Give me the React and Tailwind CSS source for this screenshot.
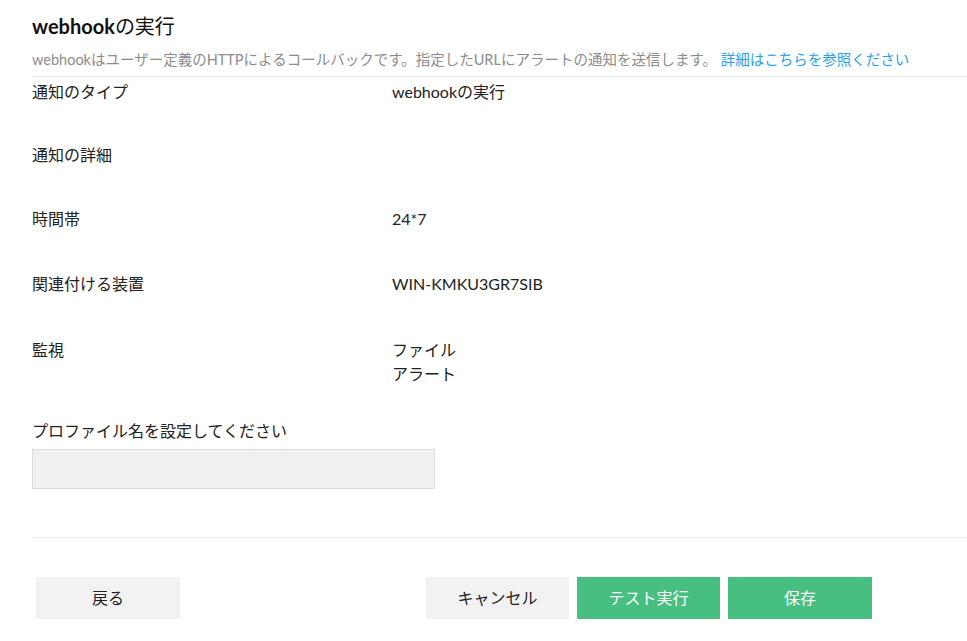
import React from 'react';

const rows = [
  {label: '通知のタイプ', value: ['webhookの実行'], gap: 'mb-[39px]'},
  {label: '通知の詳細', value: [], gap: 'mb-[40px]'},
  {label: '時間帯', value: ['24*7'], gap: 'mb-[41px]'},
  {label: '関連付ける装置', value: ['WIN-KMKU3GR7SIB'], gap: 'mb-[42px]'},
  {label: '監視', value: ['ファイル', 'アラート'], gap: 'mb-[33px]'},
];

export default function App() {
  return (
    <div
      className="min-h-[641px] bg-white pl-8 text-[#222]"
      style={{fontFamily: "Lato, 'Noto Sans CJK JP', sans-serif"}}
    >
      <h1 className="pt-[12px] text-[20px] leading-[28px] text-[#111]">
        <span className="font-bold">webhook</span>の実行
      </h1>
      <p className="mt-[10px] pb-[6px] text-[14.5px] leading-[20px] text-[#8c8c8c]">
        webhookはユーザー定義のHTTPによるコールバックです。指定したURLにアラートの通知を送信します。{' '}
        <a href="#" className="text-[#2ca0e8]">
          詳細はこちらを参照ください
        </a>
      </p>
      <div className="border-t border-[#e8e8e8] pt-[3px]">
        {rows.map(row => (
          <div key={row.label} className={`${row.gap} flex text-[16px] leading-[24px]`}>
            <div className="w-[360px] shrink-0">{row.label}</div>
            <div className="min-h-[24px]">
              {row.value.map(v => (
                <div key={v}>{v}</div>
              ))}
            </div>
          </div>
        ))}
        <div className="text-[16px] leading-[24px]">
          プロファイル名を設定してください
        </div>
        <input
          type="text"
          className="mt-[6px] block h-[40px] w-[403px] border border-[#dcdcdc] bg-[#f0f0f0] px-2 outline-none"
        />
      </div>
      <div className="mt-[48px] border-t border-[#ececec] pt-[39px]">
        <div className="flex text-[16px]">
          <button className="ml-[4px] h-[42px] w-[144px] bg-[#f2f2f2] text-[#222]">
            戻る
          </button>
          <div className="ml-[246px] flex gap-2">
            <button className="h-[42px] w-[143px] bg-[#f2f2f2] text-[#222]">
              キャンセル
            </button>
            <button className="h-[42px] w-[143px] bg-[#46bf81] text-white">
              テスト実行
            </button>
            <button className="h-[42px] w-[144px] bg-[#46bf81] text-white">
              保存
            </button>
          </div>
        </div>
      </div>
    </div>
  );
}
